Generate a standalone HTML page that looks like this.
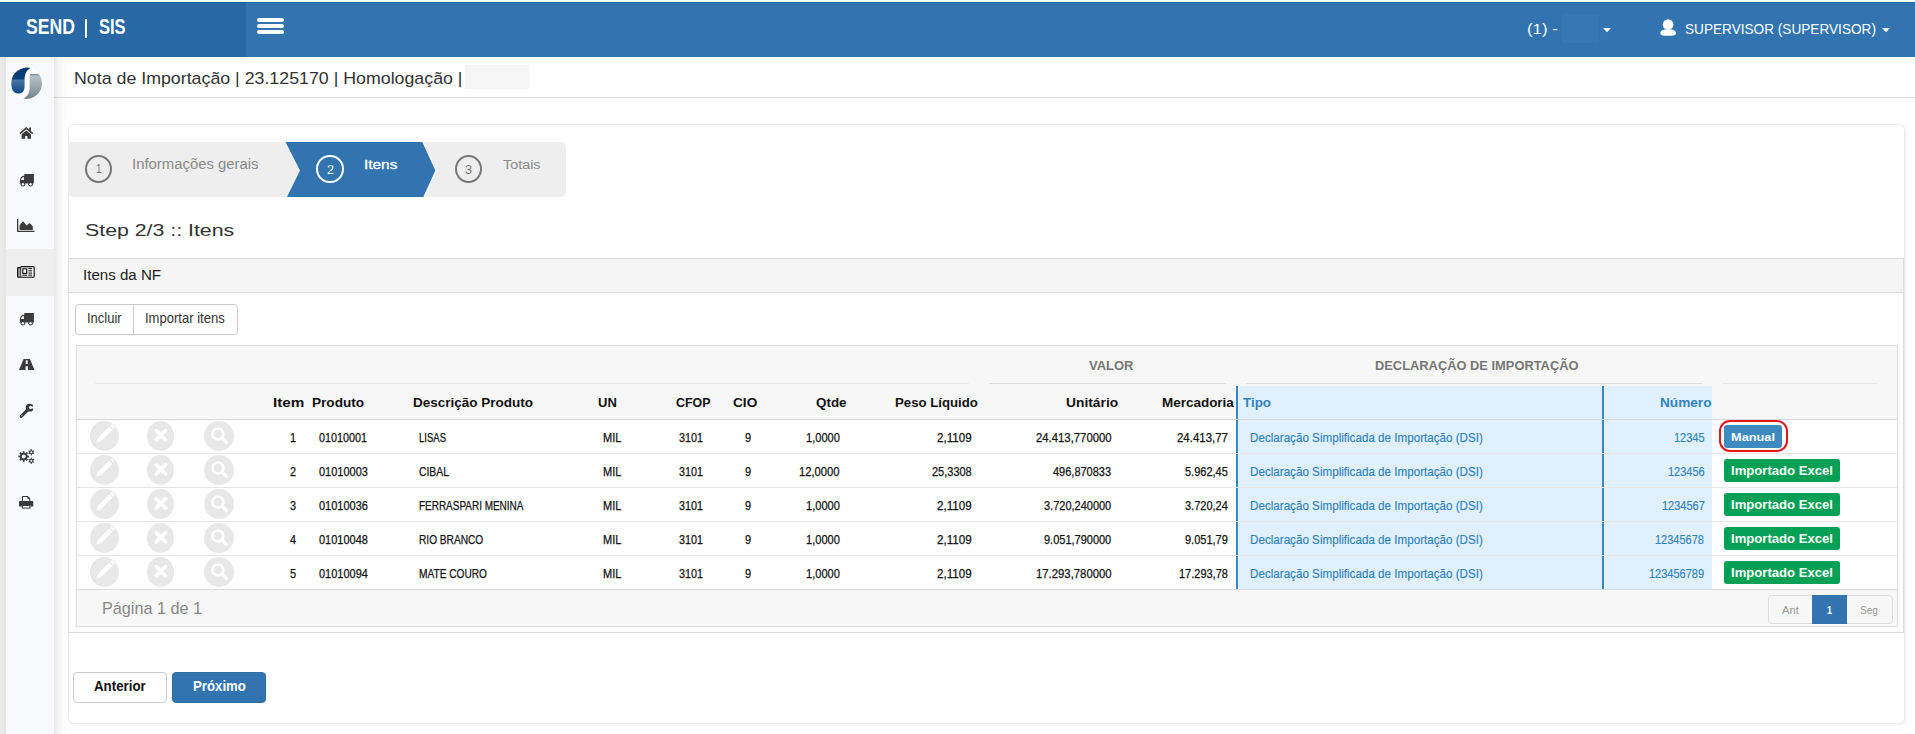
<!DOCTYPE html>
<html><head><meta charset="utf-8"><style>
html,body{margin:0;padding:0;}
body{width:1915px;height:734px;overflow:hidden;position:relative;background:#fff;font-family:"Liberation Sans",sans-serif;}
.t{position:absolute;white-space:pre;}
svg{overflow:visible}
</style></head><body>
<div style="position:absolute;left:0px;top:0px;width:1915px;height:2px;background:#fff"></div>
<div style="position:absolute;left:0px;top:2px;width:1915px;height:55px;background:#3174b0"></div>
<div style="position:absolute;left:0px;top:2px;width:246px;height:55px;background:#2868a5"></div>
<div style="position:absolute;left:0px;top:2px;width:1915px;height:1px;background:#2160a0;opacity:.6"></div>
<div class="t" style="left:25.80px;top:16px;font-size:22.2px;line-height:22.2px;color:#fff;font-weight:bold;transform:scaleX(0.7940);transform-origin:0 0;">SEND</div>
<div style="position:absolute;left:84.8px;top:18.8px;width:2.6px;height:19.2px;background:#fff"></div>
<div class="t" style="left:99.00px;top:16px;font-size:22.2px;line-height:22.2px;color:#fff;font-weight:bold;transform:scaleX(0.7442);transform-origin:0 0;">SIS</div>
<div style="position:absolute;left:257px;top:17.5px;width:27px;height:4.2px;background:#fff;border-radius:2px"></div>
<div style="position:absolute;left:257px;top:24px;width:27px;height:4.2px;background:#fff;border-radius:2px"></div>
<div style="position:absolute;left:257px;top:30.2px;width:27px;height:4.2px;background:#fff;border-radius:2px"></div>
<div class="t" style="left:1527.20px;top:22px;font-size:14.8px;line-height:14.8px;color:#fff;transform:scaleX(1.1341);transform-origin:0 0;">(1) -</div>
<div style="position:absolute;left:1562px;top:14px;width:37px;height:29px;background:#3a7cb8;opacity:.6"></div>
<svg style="position:absolute;left:1603.2px;top:27.8px;" width="8" height="4.3" viewBox="0 0 8 4.3"><path d="M0 0H8L4 4.3Z" fill="#fff"/></svg>
<svg style="position:absolute;left:1655px;top:15px;" width="25" height="25" viewBox="1655 15 25 25"><circle cx="1668.1" cy="24.6" r="5.3" fill="#fff"/><path d="M1660.3 33C1660.3 30.6 1662.8 29.4 1665 29.4H1671.3C1673.5 29.4 1676 30.6 1676 33C1676 35 1674.2 35.7 1672 35.7H1664.3C1662.1 35.7 1660.3 35 1660.3 33Z" fill="#fff"/></svg>
<div class="t" style="left:1684.50px;top:22px;font-size:14.8px;line-height:14.8px;color:#fff;transform:scaleX(0.9202);transform-origin:0 0;">SUPERVISOR (SUPERVISOR)</div>
<svg style="position:absolute;left:1882px;top:27.8px;" width="8" height="4.3" viewBox="0 0 8 4.3"><path d="M0 0H8L4 4.3Z" fill="#fff"/></svg>
<div style="position:absolute;left:0px;top:57px;width:6px;height:677px;background:linear-gradient(90deg,#ececec,#e4e4e4)"></div>
<div style="position:absolute;left:6px;top:57px;width:48px;height:677px;background:#f8f9fb"></div>
<div style="position:absolute;left:54px;top:57px;width:13px;height:677px;background:linear-gradient(90deg,rgba(0,0,0,.09),rgba(0,0,0,.04) 35%,rgba(0,0,0,0));z-index:5"></div>
<div style="position:absolute;left:6px;top:249px;width:48px;height:47px;background:#efefef"></div>
<svg style="position:absolute;left:8px;top:63px;" width="38" height="40" viewBox="8 63 38 40"><defs><linearGradient id="g1" x1="0" y1="68" x2="0" y2="93.5" gradientUnits="userSpaceOnUse"><stop offset="0" stop-color="#073a73"/><stop offset=".44" stop-color="#0a3f78"/><stop offset=".46" stop-color="#4a76a6"/><stop offset="1" stop-color="#0a4a85"/></linearGradient>
<linearGradient id="g2" x1="0" y1="74" x2="0" y2="99" gradientUnits="userSpaceOnUse"><stop offset="0" stop-color="#6f7f8a"/><stop offset=".08" stop-color="#b8c3c9"/><stop offset="1" stop-color="#748590"/></linearGradient></defs>
<circle cx="26.7" cy="83.4" r="16.6" fill="#fff"/>
<path d="M30.6 68.1A15.4 15.4 0 0 0 11.3 83.5C11.3 89.5 13.5 93.4 18 93.5C22.5 93.6 24.6 91 24.6 86V80C24.6 74.5 26.3 70.5 30.6 68.1Z" fill="url(#g1)"/>
<path d="M31 74C30.1 74.2 29.6 75 29.6 76.5V88C29.6 93 27.3 96.5 23.2 98.6A15.4 15.4 0 0 0 42 83.5C42 78.5 40.3 74 37.3 74Z" fill="url(#g2)"/></svg>
<svg style="position:absolute;left:15px;top:122px;" width="24" height="22" viewBox="15 122 24 22"><path d="M19.9 133.6L26.3 128.1L32.7 133.6" fill="none" stroke="#3b3b3b" stroke-width="1.5"/><path d="M29.2 127.6H31V131.6L29.2 130Z" fill="#3b3b3b"/><path d="M21.6 134.3L26.3 130.6L31 134.3V138.7H27.4V135.9H25.2V138.7H21.6Z" fill="#3b3b3b"/></svg>
<svg style="position:absolute;left:15px;top:168px;" width="24" height="22" viewBox="15 168 24 22"><path d="M24.3 174.1H33.9V183.6H19.2V183H19.9V180.2C19.9 177.6 21.8 175.9 24.3 175.8Z" fill="#3b3b3b"/><path d="M20.9 180H24V177C22.2 177.2 21 178.3 20.9 180Z" fill="#f8f9fb"/><circle cx="22.9" cy="184.3" r="2.3" fill="#3b3b3b"/><circle cx="30.6" cy="184.3" r="2.3" fill="#3b3b3b"/><circle cx="22.9" cy="184.3" r="1.2" fill="#f8f9fb"/><circle cx="30.6" cy="184.3" r="1.2" fill="#f8f9fb"/></svg>
<svg style="position:absolute;left:17.4px;top:219px;" width="17.5" height="13" viewBox="0 0 17.5 13"><path d="M0 0H1.3V11.7H17.5V13H0Z" fill="#3b3b3b"/><path d="M2.6 11V6.2L6 2.2L9.6 6.6L12.5 4L15.8 7.2V11Z" fill="#3b3b3b"/></svg>
<svg style="position:absolute;left:14px;top:261px;" width="24" height="22" viewBox="14 261 24 22"><rect x="20.6" y="266.6" width="13.6" height="10.6" rx="1" fill="#efefef" stroke="#111" stroke-width="1.1"/><path d="M20.3 267.6H18.3C17.8 267.6 17.6 267.9 17.6 268.3V276.4C17.6 276.9 18 277.2 18.5 277.2H20.6" fill="#999" stroke="#111" stroke-width="1.1"/><rect x="22.8" y="268.8" width="3.9" height="4.6" fill="#fff" stroke="#111" stroke-width="1.1"/><path d="M28.3 268.6H32M28.3 270.8H32M28.3 273.1H32M22.4 275.2H27M28.3 275.2H32" stroke="#111" stroke-width="1"/></svg>
<svg style="position:absolute;left:15px;top:307px;" width="24" height="22" viewBox="15 307 24 22"><path d="M24.3 313.1H33.9V322.6H19.2V322H19.9V319.2C19.9 316.6 21.8 314.9 24.3 314.8Z" fill="#3b3b3b"/><path d="M20.9 319H24V316C22.2 316.2 21 317.3 20.9 319Z" fill="#f8f9fb"/><circle cx="22.9" cy="323.3" r="2.3" fill="#3b3b3b"/><circle cx="30.6" cy="323.3" r="2.3" fill="#3b3b3b"/><circle cx="22.9" cy="323.3" r="1.2" fill="#f8f9fb"/><circle cx="30.6" cy="323.3" r="1.2" fill="#f8f9fb"/></svg>
<svg style="position:absolute;left:18.5px;top:359px;" width="15.5" height="11" viewBox="0 0 15.5 11"><path d="M0 11L4.6 0H10.9L15.5 11H8.95L8.85 7.2H6.65L6.55 11Z" fill="#3b3b3b"/><path d="M6.85 1.3H8.65L8.75 5H6.75Z" fill="#f8f9fb"/></svg>
<svg style="position:absolute;left:15px;top:400px;" width="24" height="22" viewBox="15 400 24 22"><path fill-rule="evenodd" d="M33.5 407.7A3.9 3.9 0 1 1 25.7 407.7A3.9 3.9 0 1 1 33.5 407.7Z M32.3 407.4A1.7 1.7 0 1 0 28.9 407.4A1.7 1.7 0 1 0 32.3 407.4Z" fill="#3b3b3b"/><path d="M30.6 407.4L34.5 405.6V409.4Z" fill="#f8f9fb"/><path d="M27.2 410.4L21.2 416.4" stroke="#3b3b3b" stroke-width="3.2" stroke-linecap="round"/><circle cx="21.9" cy="415.6" r=".55" fill="#f8f9fb"/></svg>
<svg style="position:absolute;left:15px;top:445px;" width="24" height="22" viewBox="15 445 24 22"><g transform="translate(23.7 456.5)"><circle r="3.8" fill="#3b3b3b"/><rect x="-0.9" y="-5.3" width="1.8" height="2.1" fill="#3b3b3b" transform="rotate(0.0)"/><rect x="-0.9" y="-5.3" width="1.8" height="2.1" fill="#3b3b3b" transform="rotate(45.0)"/><rect x="-0.9" y="-5.3" width="1.8" height="2.1" fill="#3b3b3b" transform="rotate(90.0)"/><rect x="-0.9" y="-5.3" width="1.8" height="2.1" fill="#3b3b3b" transform="rotate(135.0)"/><rect x="-0.9" y="-5.3" width="1.8" height="2.1" fill="#3b3b3b" transform="rotate(180.0)"/><rect x="-0.9" y="-5.3" width="1.8" height="2.1" fill="#3b3b3b" transform="rotate(225.0)"/><rect x="-0.9" y="-5.3" width="1.8" height="2.1" fill="#3b3b3b" transform="rotate(270.0)"/><rect x="-0.9" y="-5.3" width="1.8" height="2.1" fill="#3b3b3b" transform="rotate(315.0)"/><circle r="2.0" fill="#f8f9fb"/></g><g transform="translate(31.3 452.3)"><circle r="2.0" fill="#3b3b3b"/><rect x="-0.6" y="-3.1" width="1.2" height="1.7000000000000002" fill="#3b3b3b" transform="rotate(0.0)"/><rect x="-0.6" y="-3.1" width="1.2" height="1.7000000000000002" fill="#3b3b3b" transform="rotate(60.0)"/><rect x="-0.6" y="-3.1" width="1.2" height="1.7000000000000002" fill="#3b3b3b" transform="rotate(120.0)"/><rect x="-0.6" y="-3.1" width="1.2" height="1.7000000000000002" fill="#3b3b3b" transform="rotate(180.0)"/><rect x="-0.6" y="-3.1" width="1.2" height="1.7000000000000002" fill="#3b3b3b" transform="rotate(240.0)"/><rect x="-0.6" y="-3.1" width="1.2" height="1.7000000000000002" fill="#3b3b3b" transform="rotate(300.0)"/><circle r="1.0" fill="#f8f9fb"/></g><g transform="translate(31.3 460.8)"><circle r="2.0" fill="#3b3b3b"/><rect x="-0.6" y="-3.1" width="1.2" height="1.7000000000000002" fill="#3b3b3b" transform="rotate(0.0)"/><rect x="-0.6" y="-3.1" width="1.2" height="1.7000000000000002" fill="#3b3b3b" transform="rotate(60.0)"/><rect x="-0.6" y="-3.1" width="1.2" height="1.7000000000000002" fill="#3b3b3b" transform="rotate(120.0)"/><rect x="-0.6" y="-3.1" width="1.2" height="1.7000000000000002" fill="#3b3b3b" transform="rotate(180.0)"/><rect x="-0.6" y="-3.1" width="1.2" height="1.7000000000000002" fill="#3b3b3b" transform="rotate(240.0)"/><rect x="-0.6" y="-3.1" width="1.2" height="1.7000000000000002" fill="#3b3b3b" transform="rotate(300.0)"/><circle r="1.0" fill="#f8f9fb"/></g></svg>
<svg style="position:absolute;left:19px;top:496px;" width="14.3" height="12.6" viewBox="0 0 14.3 12.6"><path d="M3 0H8.8L11.2 2.3V5H3Z" fill="#3b3b3b"/><path d="M4 1H8.3V2.8H10.2V5H4Z" fill="#f8f9fb"/><path d="M1.2 5H13.1C13.8 5 14.3 5.5 14.3 6.2V10.5H11.5V9H2.8V10.5H0V6.2C0 5.5 .5 5 1.2 5Z" fill="#3b3b3b"/><path d="M2.8 9H11.5V12.6H2.8Z" fill="#3b3b3b"/><path d="M3.9 10H10.4V11.6H3.9Z" fill="#f8f9fb"/></svg>
<div class="t" style="left:74.30px;top:70px;font-size:17.4px;line-height:17.4px;color:#333;transform:scaleX(1.0224);transform-origin:0 0;">Nota de Importação | 23.125170 | Homologação |</div>
<div style="position:absolute;left:465px;top:65px;width:64px;height:24px;background:#f6f6f6"></div>
<div style="position:absolute;left:54px;top:97px;width:1861px;height:1px;background:#dcdcdc"></div>
<div style="position:absolute;left:67.5px;top:124px;width:1837.5px;height:600px;border:1px solid #ececec;border-radius:6px;box-shadow:1px 1px 3px rgba(0,0,0,.06);box-sizing:border-box;background:#fff"></div>
<svg style="position:absolute;left:68px;top:142px;" width="499" height="55" viewBox="0 0 499 55"><path d="M5 0H493A5 5 0 0 1 498 5V50A5 5 0 0 1 493 55H5A5 5 0 0 1 0 50V5A5 5 0 0 1 5 0Z" fill="#eeeeee"/><path d="M217.5 0H355L368 28.5L356 55H219L232 28.5Z" fill="#3174b0"/><path d="M355 0L368 28.5L356 55" fill="none" stroke="#fff" stroke-width="1.2"/></svg>
<div style="position:absolute;left:84.8px;top:155px;width:23.4px;height:24.2px;border:2px solid #777;border-radius:50%"></div>
<div style="position:absolute;left:316px;top:155px;width:23.6px;height:24.2px;border:2px solid #fff;border-radius:50%"></div>
<div style="position:absolute;left:454.6px;top:155px;width:23.4px;height:24.2px;border:2px solid #777;border-radius:50%"></div>
<div class="t" style="left:95.50px;top:163px;font-size:12.4px;line-height:12.4px;color:#777;transform:scaleX(0.7992);transform-origin:0 0;">1</div>
<div class="t" style="left:326.50px;top:163px;font-size:13.1px;line-height:13.1px;color:#fff;transform:scaleX(0.9628);transform-origin:0 0;">2</div>
<div class="t" style="left:465.30px;top:163px;font-size:13.1px;line-height:13.1px;color:#777;transform:scaleX(0.9628);transform-origin:0 0;">3</div>
<div class="t" style="left:132.40px;top:158px;font-size:13.8px;line-height:13.8px;color:#8a8a8a;transform:scaleX(1.0786);transform-origin:0 0;">Informações gerais</div>
<div class="t" style="left:363.80px;top:158px;font-size:13.1px;line-height:13.1px;color:#fff;transform:scaleX(1.1749);transform-origin:0 0;-webkit-text-stroke:.3px #fff;">Itens</div>
<div class="t" style="left:502.50px;top:158px;font-size:13.1px;line-height:13.1px;color:#8a8a8a;transform:scaleX(1.0968);transform-origin:0 0;">Totais</div>
<div class="t" style="left:85.20px;top:222px;font-size:17.4px;line-height:17.4px;color:#333;transform:scaleX(1.2249);transform-origin:0 0;">Step 2/3 :: Itens</div>
<div style="position:absolute;left:68px;top:258px;width:1836px;height:375px;border:1px solid #dddddd;box-sizing:border-box;background:#fff"></div>
<div style="position:absolute;left:69px;top:259px;width:1834px;height:33px;background:#f5f5f5;border-bottom:1px solid #dddddd"></div>
<div class="t" style="left:82.90px;top:267px;font-size:15.5px;line-height:15.5px;color:#222;transform:scaleX(0.9734);transform-origin:0 0;">Itens da NF</div>
<div style="position:absolute;left:75px;top:304px;width:163px;height:31px;border:1px solid #ccc;border-radius:4px;box-sizing:border-box;background:#fff"></div>
<div style="position:absolute;left:133px;top:305px;width:1px;height:29px;background:#ccc"></div>
<div class="t" style="left:87.30px;top:311px;font-size:14.1px;line-height:14.1px;color:#333;transform:scaleX(0.9217);transform-origin:0 0;">Incluir</div>
<div class="t" style="left:145.30px;top:311px;font-size:14.1px;line-height:14.1px;color:#333;transform:scaleX(0.9244);transform-origin:0 0;">Importar itens</div>
<div style="position:absolute;left:76px;top:345px;width:1822px;height:282px;border:1px solid #dddddd;box-sizing:border-box;background:#f7f7f7"></div>
<div style="position:absolute;left:77px;top:419px;width:1820px;height:170px;background:#fff"></div>
<div style="position:absolute;left:1237px;top:386px;width:475px;height:203px;background:#e0f0fc"></div>
<div style="position:absolute;left:1236.3px;top:386px;width:2px;height:203px;background:#3a86be"></div>
<div style="position:absolute;left:1602px;top:386px;width:2px;height:203px;background:#3a86be"></div>
<div style="position:absolute;left:95px;top:383px;width:874px;height:1px;background:#e9e9e9"></div>
<div style="position:absolute;left:989px;top:383px;width:237px;height:1px;background:#dcdcdc"></div>
<div style="position:absolute;left:1246px;top:383px;width:456px;height:1px;background:#dcdcdc"></div>
<div style="position:absolute;left:1722px;top:383px;width:156px;height:1px;background:#e9e9e9"></div>
<div style="position:absolute;left:77px;top:419px;width:1820px;height:1px;background:#d9d9d9"></div>
<div style="position:absolute;left:77px;top:453px;width:1820px;height:1px;background:#e6e6e6"></div>
<div style="position:absolute;left:77px;top:487px;width:1820px;height:1px;background:#e6e6e6"></div>
<div style="position:absolute;left:77px;top:521px;width:1820px;height:1px;background:#e6e6e6"></div>
<div style="position:absolute;left:77px;top:555px;width:1820px;height:1px;background:#e6e6e6"></div>
<div style="position:absolute;left:77px;top:588.5px;width:1820px;height:1px;background:#dcdcdc"></div>
<div class="t" style="left:1088.50px;top:359px;font-size:13.1px;line-height:13.1px;color:#777;font-weight:bold;transform:scaleX(0.9874);transform-origin:0 0;">VALOR</div>
<div class="t" style="left:1375.00px;top:359px;font-size:13.1px;line-height:13.1px;color:#777;font-weight:bold;transform:scaleX(0.9827);transform-origin:0 0;">DECLARAÇÃO DE IMPORTAÇÃO</div>
<div class="t" style="left:272.50px;top:396px;font-size:13.1px;line-height:13.1px;color:#111;font-weight:bold;transform:scaleX(1.1664);transform-origin:0 0;">Item</div>
<div class="t" style="left:312.20px;top:396px;font-size:13.1px;line-height:13.1px;color:#111;font-weight:bold;transform:scaleX(1.0390);transform-origin:0 0;">Produto</div>
<div class="t" style="left:413.30px;top:396px;font-size:13.1px;line-height:13.1px;color:#111;font-weight:bold;transform:scaleX(1.0313);transform-origin:0 0;">Descrição Produto</div>
<div class="t" style="left:597.60px;top:396px;font-size:13.1px;line-height:13.1px;color:#111;font-weight:bold;transform:scaleX(0.9932);transform-origin:0 0;">UN</div>
<div class="t" style="left:675.90px;top:396px;font-size:13.1px;line-height:13.1px;color:#111;font-weight:bold;transform:scaleX(0.9473);transform-origin:0 0;">CFOP</div>
<div class="t" style="left:732.60px;top:396px;font-size:13.1px;line-height:13.1px;color:#111;font-weight:bold;transform:scaleX(1.0421);transform-origin:0 0;">CIO</div>
<div class="t" style="left:815.60px;top:396px;font-size:13.1px;line-height:13.1px;color:#111;font-weight:bold;transform:scaleX(1.0245);transform-origin:0 0;">Qtde</div>
<div class="t" style="left:895.00px;top:396px;font-size:13.1px;line-height:13.1px;color:#111;font-weight:bold;transform:scaleX(1.0089);transform-origin:0 0;">Peso Líquido</div>
<div class="t" style="left:1065.50px;top:396px;font-size:13.1px;line-height:13.1px;color:#111;font-weight:bold;transform:scaleX(1.0542);transform-origin:0 0;">Unitário</div>
<div class="t" style="left:1162.00px;top:396px;font-size:13.1px;line-height:13.1px;color:#111;font-weight:bold;transform:scaleX(1.0283);transform-origin:0 0;">Mercadoria</div>
<div class="t" style="left:1243.00px;top:396px;font-size:13.1px;line-height:13.1px;color:#2f83bf;font-weight:bold;transform:scaleX(1.0227);transform-origin:0 0;">Tipo</div>
<div class="t" style="left:1659.50px;top:396px;font-size:13.1px;line-height:13.1px;color:#2f83bf;font-weight:bold;transform:scaleX(1.0400);transform-origin:0 0;">Número</div>
<div style="position:absolute;left:90px;top:421px;width:29px;height:30px;border-radius:50%;background:#e8e8e8"></div>
<div style="position:absolute;left:147px;top:421px;width:27px;height:30px;border-radius:50%;background:#e8e8e8"></div>
<div style="position:absolute;left:204px;top:421px;width:30px;height:30px;border-radius:50%;background:#e8e8e8"></div>
<svg style="position:absolute;left:85px;top:418px;" width="155" height="38" viewBox="85 418 155 38"><path d="M99 440L110.9 428.1" stroke="#fff" stroke-width="4.4"/><path d="M96.5 442.5L97.44 438.44L100.56 441.56Z" fill="#fff"/><path d="M111.7 427.3L113.4 425.6" stroke="#fff" stroke-width="4.4"/><path d="M156.3 430.7L165.5 439.9M165.5 430.7L156.3 439.9" stroke="#fff" stroke-width="3.7" stroke-linecap="round"/><circle cx="217.9" cy="434" r="5.5" fill="none" stroke="#fff" stroke-width="2.6"/><path d="M222.3 438.4L226.4 442.5" stroke="#fff" stroke-width="3.2" stroke-linecap="round"/></svg>
<div class="t" style="left:290.40px;top:432px;font-size:12.9px;line-height:12.9px;color:#111;transform:scaleX(0.8524);transform-origin:0 0;-webkit-text-stroke:.25px #111;">1</div>
<div class="t" style="left:318.70px;top:432px;font-size:12.9px;line-height:12.9px;color:#111;transform:scaleX(0.8362);transform-origin:0 0;-webkit-text-stroke:.25px #111;">01010001</div>
<div class="t" style="left:419.30px;top:432px;font-size:12.9px;line-height:12.9px;color:#111;transform:scaleX(0.7383);transform-origin:0 0;-webkit-text-stroke:.25px #111;">LISAS</div>
<div class="t" style="left:603.30px;top:432px;font-size:12.9px;line-height:12.9px;color:#111;transform:scaleX(0.8520);transform-origin:0 0;-webkit-text-stroke:.25px #111;">MIL</div>
<div class="t" style="left:679.00px;top:432px;font-size:12.9px;line-height:12.9px;color:#111;transform:scaleX(0.8362);transform-origin:0 0;-webkit-text-stroke:.25px #111;">3101</div>
<div class="t" style="left:744.65px;top:432px;font-size:12.9px;line-height:12.9px;color:#111;transform:scaleX(0.8524);transform-origin:0 0;-webkit-text-stroke:.25px #111;">9</div>
<div class="t" style="left:805.80px;top:432px;font-size:12.9px;line-height:12.9px;color:#111;transform:scaleX(0.8588);transform-origin:0 0;-webkit-text-stroke:.25px #111;">1,0000</div>
<div class="t" style="left:936.70px;top:432px;font-size:12.9px;line-height:12.9px;color:#111;transform:scaleX(0.9011);transform-origin:0 0;-webkit-text-stroke:.25px #111;">2,1109</div>
<div class="t" style="left:1035.50px;top:432px;font-size:12.9px;line-height:12.9px;color:#111;transform:scaleX(0.8791);transform-origin:0 0;-webkit-text-stroke:.25px #111;">24.413,770000</div>
<div class="t" style="left:1176.90px;top:432px;font-size:12.9px;line-height:12.9px;color:#111;transform:scaleX(0.8884);transform-origin:0 0;-webkit-text-stroke:.25px #111;">24.413,77</div>
<div class="t" style="left:1249.60px;top:432px;font-size:12.9px;line-height:12.9px;color:#2f83bf;transform:scaleX(0.9030);transform-origin:0 0;-webkit-text-stroke:.15px #2f83bf;">Declaração Simplificada de Importação (DSI)</div>
<div class="t" style="left:1673.90px;top:432px;font-size:12.9px;line-height:12.9px;color:#2f83bf;transform:scaleX(0.8505);transform-origin:0 0;-webkit-text-stroke:.15px #2f83bf;">12345</div>
<div style="position:absolute;left:1724px;top:425px;width:58px;height:23px;border-radius:3px;background:#3d8ac0"></div>
<div class="t" style="left:1731.00px;top:432px;font-size:11.8px;line-height:11.8px;color:#fff;font-weight:bold;transform:scaleX(1.0824);transform-origin:0 0;">Manual</div>
<div style="position:absolute;left:1719px;top:419.7px;width:69.4px;height:32.6px;border:2px solid #e8141c;border-radius:11px;box-sizing:border-box"></div>
<div style="position:absolute;left:90px;top:455px;width:29px;height:30px;border-radius:50%;background:#e8e8e8"></div>
<div style="position:absolute;left:147px;top:455px;width:27px;height:30px;border-radius:50%;background:#e8e8e8"></div>
<div style="position:absolute;left:204px;top:455px;width:30px;height:30px;border-radius:50%;background:#e8e8e8"></div>
<svg style="position:absolute;left:85px;top:452px;" width="155" height="38" viewBox="85 418 155 38"><path d="M99 440L110.9 428.1" stroke="#fff" stroke-width="4.4"/><path d="M96.5 442.5L97.44 438.44L100.56 441.56Z" fill="#fff"/><path d="M111.7 427.3L113.4 425.6" stroke="#fff" stroke-width="4.4"/><path d="M156.3 430.7L165.5 439.9M165.5 430.7L156.3 439.9" stroke="#fff" stroke-width="3.7" stroke-linecap="round"/><circle cx="217.9" cy="434" r="5.5" fill="none" stroke="#fff" stroke-width="2.6"/><path d="M222.3 438.4L226.4 442.5" stroke="#fff" stroke-width="3.2" stroke-linecap="round"/></svg>
<div class="t" style="left:290.40px;top:466px;font-size:12.9px;line-height:12.9px;color:#111;transform:scaleX(0.8524);transform-origin:0 0;-webkit-text-stroke:.25px #111;">2</div>
<div class="t" style="left:318.70px;top:466px;font-size:12.9px;line-height:12.9px;color:#111;transform:scaleX(0.8524);transform-origin:0 0;-webkit-text-stroke:.25px #111;">01010003</div>
<div class="t" style="left:419.30px;top:466px;font-size:12.9px;line-height:12.9px;color:#111;transform:scaleX(0.8047);transform-origin:0 0;-webkit-text-stroke:.25px #111;">CIBAL</div>
<div class="t" style="left:603.30px;top:466px;font-size:12.9px;line-height:12.9px;color:#111;transform:scaleX(0.8520);transform-origin:0 0;-webkit-text-stroke:.25px #111;">MIL</div>
<div class="t" style="left:679.00px;top:466px;font-size:12.9px;line-height:12.9px;color:#111;transform:scaleX(0.8362);transform-origin:0 0;-webkit-text-stroke:.25px #111;">3101</div>
<div class="t" style="left:744.65px;top:466px;font-size:12.9px;line-height:12.9px;color:#111;transform:scaleX(0.8524);transform-origin:0 0;-webkit-text-stroke:.25px #111;">9</div>
<div class="t" style="left:799.10px;top:466px;font-size:12.9px;line-height:12.9px;color:#111;transform:scaleX(0.8706);transform-origin:0 0;-webkit-text-stroke:.25px #111;">12,0000</div>
<div class="t" style="left:931.65px;top:466px;font-size:12.9px;line-height:12.9px;color:#111;transform:scaleX(0.8524);transform-origin:0 0;-webkit-text-stroke:.25px #111;">25,3308</div>
<div class="t" style="left:1053.09px;top:466px;font-size:12.9px;line-height:12.9px;color:#111;transform:scaleX(0.8524);transform-origin:0 0;-webkit-text-stroke:.25px #111;">496,870833</div>
<div class="t" style="left:1185.07px;top:466px;font-size:12.9px;line-height:12.9px;color:#111;transform:scaleX(0.8524);transform-origin:0 0;-webkit-text-stroke:.25px #111;">5.962,45</div>
<div class="t" style="left:1249.60px;top:466px;font-size:12.9px;line-height:12.9px;color:#2f83bf;transform:scaleX(0.9030);transform-origin:0 0;-webkit-text-stroke:.15px #2f83bf;">Declaração Simplificada de Importação (DSI)</div>
<div class="t" style="left:1667.73px;top:466px;font-size:12.9px;line-height:12.9px;color:#2f83bf;transform:scaleX(0.8524);transform-origin:0 0;-webkit-text-stroke:.15px #2f83bf;">123456</div>
<div style="position:absolute;left:1724px;top:459px;width:116px;height:23px;border-radius:3px;background:#03a055"></div>
<div class="t" style="left:1731.00px;top:465px;font-size:12.4px;line-height:12.4px;color:#fff;font-weight:bold;transform:scaleX(1.0573);transform-origin:0 0;">Importado Excel</div>
<div style="position:absolute;left:90px;top:489px;width:29px;height:30px;border-radius:50%;background:#e8e8e8"></div>
<div style="position:absolute;left:147px;top:489px;width:27px;height:30px;border-radius:50%;background:#e8e8e8"></div>
<div style="position:absolute;left:204px;top:489px;width:30px;height:30px;border-radius:50%;background:#e8e8e8"></div>
<svg style="position:absolute;left:85px;top:486px;" width="155" height="38" viewBox="85 418 155 38"><path d="M99 440L110.9 428.1" stroke="#fff" stroke-width="4.4"/><path d="M96.5 442.5L97.44 438.44L100.56 441.56Z" fill="#fff"/><path d="M111.7 427.3L113.4 425.6" stroke="#fff" stroke-width="4.4"/><path d="M156.3 430.7L165.5 439.9M165.5 430.7L156.3 439.9" stroke="#fff" stroke-width="3.7" stroke-linecap="round"/><circle cx="217.9" cy="434" r="5.5" fill="none" stroke="#fff" stroke-width="2.6"/><path d="M222.3 438.4L226.4 442.5" stroke="#fff" stroke-width="3.2" stroke-linecap="round"/></svg>
<div class="t" style="left:290.40px;top:500px;font-size:12.9px;line-height:12.9px;color:#111;transform:scaleX(0.8524);transform-origin:0 0;-webkit-text-stroke:.25px #111;">3</div>
<div class="t" style="left:318.70px;top:500px;font-size:12.9px;line-height:12.9px;color:#111;transform:scaleX(0.8524);transform-origin:0 0;-webkit-text-stroke:.25px #111;">01010036</div>
<div class="t" style="left:419.30px;top:500px;font-size:12.9px;line-height:12.9px;color:#111;transform:scaleX(0.7726);transform-origin:0 0;-webkit-text-stroke:.25px #111;">FERRASPARI MENINA</div>
<div class="t" style="left:603.30px;top:500px;font-size:12.9px;line-height:12.9px;color:#111;transform:scaleX(0.8520);transform-origin:0 0;-webkit-text-stroke:.25px #111;">MIL</div>
<div class="t" style="left:679.00px;top:500px;font-size:12.9px;line-height:12.9px;color:#111;transform:scaleX(0.8362);transform-origin:0 0;-webkit-text-stroke:.25px #111;">3101</div>
<div class="t" style="left:744.65px;top:500px;font-size:12.9px;line-height:12.9px;color:#111;transform:scaleX(0.8524);transform-origin:0 0;-webkit-text-stroke:.25px #111;">9</div>
<div class="t" style="left:805.80px;top:500px;font-size:12.9px;line-height:12.9px;color:#111;transform:scaleX(0.8588);transform-origin:0 0;-webkit-text-stroke:.25px #111;">1,0000</div>
<div class="t" style="left:936.70px;top:500px;font-size:12.9px;line-height:12.9px;color:#111;transform:scaleX(0.9011);transform-origin:0 0;-webkit-text-stroke:.25px #111;">2,1109</div>
<div class="t" style="left:1043.96px;top:500px;font-size:12.9px;line-height:12.9px;color:#111;transform:scaleX(0.8524);transform-origin:0 0;-webkit-text-stroke:.25px #111;">3.720,240000</div>
<div class="t" style="left:1185.07px;top:500px;font-size:12.9px;line-height:12.9px;color:#111;transform:scaleX(0.8524);transform-origin:0 0;-webkit-text-stroke:.25px #111;">3.720,24</div>
<div class="t" style="left:1249.60px;top:500px;font-size:12.9px;line-height:12.9px;color:#2f83bf;transform:scaleX(0.9030);transform-origin:0 0;-webkit-text-stroke:.15px #2f83bf;">Declaração Simplificada de Importação (DSI)</div>
<div class="t" style="left:1661.57px;top:500px;font-size:12.9px;line-height:12.9px;color:#2f83bf;transform:scaleX(0.8524);transform-origin:0 0;-webkit-text-stroke:.15px #2f83bf;">1234567</div>
<div style="position:absolute;left:1724px;top:493px;width:116px;height:23px;border-radius:3px;background:#03a055"></div>
<div class="t" style="left:1731.00px;top:499px;font-size:12.4px;line-height:12.4px;color:#fff;font-weight:bold;transform:scaleX(1.0573);transform-origin:0 0;">Importado Excel</div>
<div style="position:absolute;left:90px;top:523px;width:29px;height:30px;border-radius:50%;background:#e8e8e8"></div>
<div style="position:absolute;left:147px;top:523px;width:27px;height:30px;border-radius:50%;background:#e8e8e8"></div>
<div style="position:absolute;left:204px;top:523px;width:30px;height:30px;border-radius:50%;background:#e8e8e8"></div>
<svg style="position:absolute;left:85px;top:520px;" width="155" height="38" viewBox="85 418 155 38"><path d="M99 440L110.9 428.1" stroke="#fff" stroke-width="4.4"/><path d="M96.5 442.5L97.44 438.44L100.56 441.56Z" fill="#fff"/><path d="M111.7 427.3L113.4 425.6" stroke="#fff" stroke-width="4.4"/><path d="M156.3 430.7L165.5 439.9M165.5 430.7L156.3 439.9" stroke="#fff" stroke-width="3.7" stroke-linecap="round"/><circle cx="217.9" cy="434" r="5.5" fill="none" stroke="#fff" stroke-width="2.6"/><path d="M222.3 438.4L226.4 442.5" stroke="#fff" stroke-width="3.2" stroke-linecap="round"/></svg>
<div class="t" style="left:290.40px;top:534px;font-size:12.9px;line-height:12.9px;color:#111;transform:scaleX(0.8524);transform-origin:0 0;-webkit-text-stroke:.25px #111;">4</div>
<div class="t" style="left:318.70px;top:534px;font-size:12.9px;line-height:12.9px;color:#111;transform:scaleX(0.8524);transform-origin:0 0;-webkit-text-stroke:.25px #111;">01010048</div>
<div class="t" style="left:419.30px;top:534px;font-size:12.9px;line-height:12.9px;color:#111;transform:scaleX(0.7868);transform-origin:0 0;-webkit-text-stroke:.25px #111;">RIO BRANCO</div>
<div class="t" style="left:603.30px;top:534px;font-size:12.9px;line-height:12.9px;color:#111;transform:scaleX(0.8520);transform-origin:0 0;-webkit-text-stroke:.25px #111;">MIL</div>
<div class="t" style="left:679.00px;top:534px;font-size:12.9px;line-height:12.9px;color:#111;transform:scaleX(0.8362);transform-origin:0 0;-webkit-text-stroke:.25px #111;">3101</div>
<div class="t" style="left:744.65px;top:534px;font-size:12.9px;line-height:12.9px;color:#111;transform:scaleX(0.8524);transform-origin:0 0;-webkit-text-stroke:.25px #111;">9</div>
<div class="t" style="left:805.80px;top:534px;font-size:12.9px;line-height:12.9px;color:#111;transform:scaleX(0.8588);transform-origin:0 0;-webkit-text-stroke:.25px #111;">1,0000</div>
<div class="t" style="left:936.70px;top:534px;font-size:12.9px;line-height:12.9px;color:#111;transform:scaleX(0.9011);transform-origin:0 0;-webkit-text-stroke:.25px #111;">2,1109</div>
<div class="t" style="left:1043.96px;top:534px;font-size:12.9px;line-height:12.9px;color:#111;transform:scaleX(0.8524);transform-origin:0 0;-webkit-text-stroke:.25px #111;">9.051,790000</div>
<div class="t" style="left:1185.07px;top:534px;font-size:12.9px;line-height:12.9px;color:#111;transform:scaleX(0.8524);transform-origin:0 0;-webkit-text-stroke:.25px #111;">9.051,79</div>
<div class="t" style="left:1249.60px;top:534px;font-size:12.9px;line-height:12.9px;color:#2f83bf;transform:scaleX(0.9030);transform-origin:0 0;-webkit-text-stroke:.15px #2f83bf;">Declaração Simplificada de Importação (DSI)</div>
<div class="t" style="left:1655.47px;top:534px;font-size:12.9px;line-height:12.9px;color:#2f83bf;transform:scaleX(0.8524);transform-origin:0 0;-webkit-text-stroke:.15px #2f83bf;">12345678</div>
<div style="position:absolute;left:1724px;top:527px;width:116px;height:23px;border-radius:3px;background:#03a055"></div>
<div class="t" style="left:1731.00px;top:533px;font-size:12.4px;line-height:12.4px;color:#fff;font-weight:bold;transform:scaleX(1.0573);transform-origin:0 0;">Importado Excel</div>
<div style="position:absolute;left:90px;top:557px;width:29px;height:30px;border-radius:50%;background:#e8e8e8"></div>
<div style="position:absolute;left:147px;top:557px;width:27px;height:30px;border-radius:50%;background:#e8e8e8"></div>
<div style="position:absolute;left:204px;top:557px;width:30px;height:30px;border-radius:50%;background:#e8e8e8"></div>
<svg style="position:absolute;left:85px;top:554px;" width="155" height="38" viewBox="85 418 155 38"><path d="M99 440L110.9 428.1" stroke="#fff" stroke-width="4.4"/><path d="M96.5 442.5L97.44 438.44L100.56 441.56Z" fill="#fff"/><path d="M111.7 427.3L113.4 425.6" stroke="#fff" stroke-width="4.4"/><path d="M156.3 430.7L165.5 439.9M165.5 430.7L156.3 439.9" stroke="#fff" stroke-width="3.7" stroke-linecap="round"/><circle cx="217.9" cy="434" r="5.5" fill="none" stroke="#fff" stroke-width="2.6"/><path d="M222.3 438.4L226.4 442.5" stroke="#fff" stroke-width="3.2" stroke-linecap="round"/></svg>
<div class="t" style="left:290.40px;top:568px;font-size:12.9px;line-height:12.9px;color:#111;transform:scaleX(0.8524);transform-origin:0 0;-webkit-text-stroke:.25px #111;">5</div>
<div class="t" style="left:318.70px;top:568px;font-size:12.9px;line-height:12.9px;color:#111;transform:scaleX(0.8524);transform-origin:0 0;-webkit-text-stroke:.25px #111;">01010094</div>
<div class="t" style="left:419.30px;top:568px;font-size:12.9px;line-height:12.9px;color:#111;transform:scaleX(0.7862);transform-origin:0 0;-webkit-text-stroke:.25px #111;">MATE COURO</div>
<div class="t" style="left:603.30px;top:568px;font-size:12.9px;line-height:12.9px;color:#111;transform:scaleX(0.8520);transform-origin:0 0;-webkit-text-stroke:.25px #111;">MIL</div>
<div class="t" style="left:679.00px;top:568px;font-size:12.9px;line-height:12.9px;color:#111;transform:scaleX(0.8362);transform-origin:0 0;-webkit-text-stroke:.25px #111;">3101</div>
<div class="t" style="left:744.65px;top:568px;font-size:12.9px;line-height:12.9px;color:#111;transform:scaleX(0.8524);transform-origin:0 0;-webkit-text-stroke:.25px #111;">9</div>
<div class="t" style="left:805.80px;top:568px;font-size:12.9px;line-height:12.9px;color:#111;transform:scaleX(0.8588);transform-origin:0 0;-webkit-text-stroke:.25px #111;">1,0000</div>
<div class="t" style="left:936.70px;top:568px;font-size:12.9px;line-height:12.9px;color:#111;transform:scaleX(0.9011);transform-origin:0 0;-webkit-text-stroke:.25px #111;">2,1109</div>
<div class="t" style="left:1035.50px;top:568px;font-size:12.9px;line-height:12.9px;color:#111;transform:scaleX(0.8791);transform-origin:0 0;-webkit-text-stroke:.25px #111;">17.293,780000</div>
<div class="t" style="left:1178.97px;top:568px;font-size:12.9px;line-height:12.9px;color:#111;transform:scaleX(0.8524);transform-origin:0 0;-webkit-text-stroke:.25px #111;">17.293,78</div>
<div class="t" style="left:1249.60px;top:568px;font-size:12.9px;line-height:12.9px;color:#2f83bf;transform:scaleX(0.9030);transform-origin:0 0;-webkit-text-stroke:.15px #2f83bf;">Declaração Simplificada de Importação (DSI)</div>
<div class="t" style="left:1649.37px;top:568px;font-size:12.9px;line-height:12.9px;color:#2f83bf;transform:scaleX(0.8524);transform-origin:0 0;-webkit-text-stroke:.15px #2f83bf;">123456789</div>
<div style="position:absolute;left:1724px;top:561px;width:116px;height:23px;border-radius:3px;background:#03a055"></div>
<div class="t" style="left:1731.00px;top:567px;font-size:12.4px;line-height:12.4px;color:#fff;font-weight:bold;transform:scaleX(1.0573);transform-origin:0 0;">Importado Excel</div>
<div class="t" style="left:102.20px;top:600px;font-size:17.2px;line-height:17.2px;color:#888;transform:scaleX(0.9432);transform-origin:0 0;">Página 1 de 1</div>
<div style="position:absolute;left:1768px;top:595px;width:125px;height:29px;border:1px solid #ddd;border-radius:4px;box-sizing:border-box;background:#f7f7f7"></div>
<div style="position:absolute;left:1812px;top:595px;width:35px;height:29px;background:#3174b0"></div>
<div class="t" style="left:1782.00px;top:606px;font-size:10.2px;line-height:10.2px;color:#999;transform:scaleX(1.1111);transform-origin:0 0;">Ant</div>
<div class="t" style="left:1826.50px;top:606px;font-size:10.2px;line-height:10.2px;color:#fff;font-weight:bold;transform:scaleX(0.8832);transform-origin:0 0;">1</div>
<div class="t" style="left:1860.00px;top:606px;font-size:10.2px;line-height:10.2px;color:#999;transform:scaleX(0.9914);transform-origin:0 0;">Seg</div>
<div style="position:absolute;left:73px;top:672px;width:94px;height:31px;border:1px solid #ccc;border-radius:4px;box-sizing:border-box;background:#fff"></div>
<div style="position:absolute;left:172px;top:672px;width:94px;height:31px;border:1px solid #2e6da4;border-radius:4px;box-sizing:border-box;background:#3174b0"></div>
<div class="t" style="left:94.20px;top:679px;font-size:14.5px;line-height:14.5px;color:#111;font-weight:bold;transform:scaleX(0.9166);transform-origin:0 0;">Anterior</div>
<div class="t" style="left:192.60px;top:679px;font-size:14.5px;line-height:14.5px;color:#fff;font-weight:bold;transform:scaleX(0.9121);transform-origin:0 0;">Próximo</div>
</body></html>
